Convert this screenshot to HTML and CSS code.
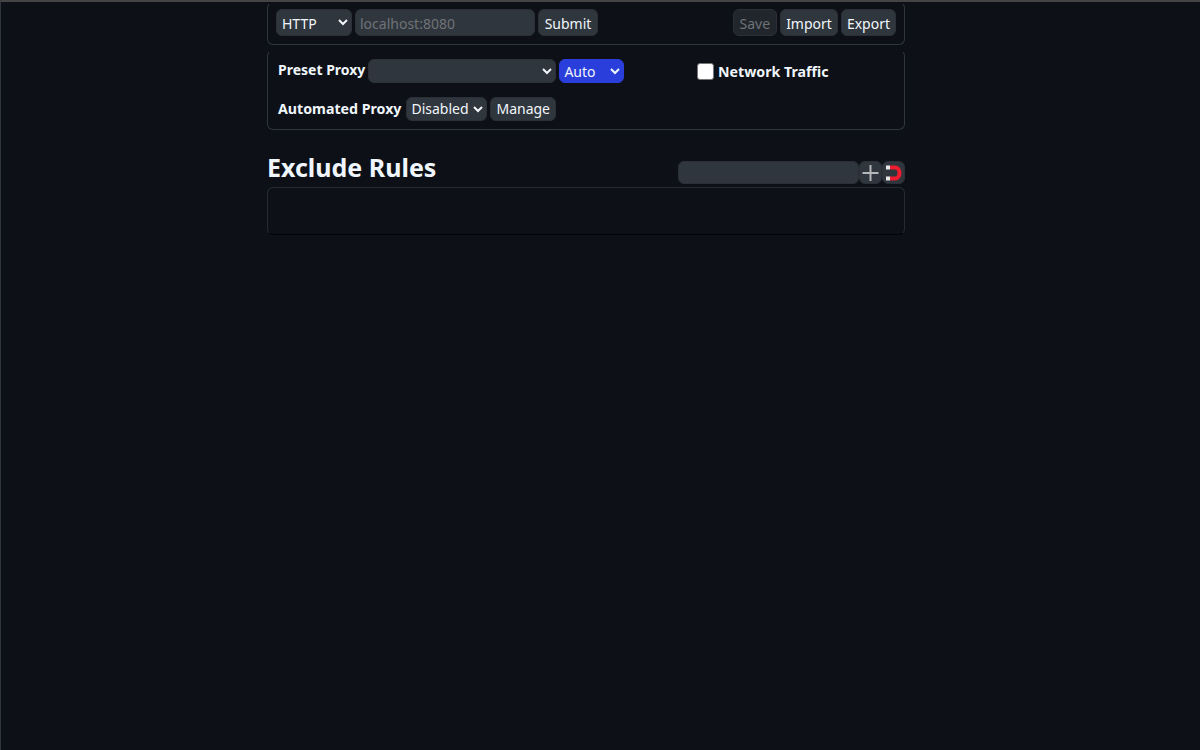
FILE: index.html
```html
<!DOCTYPE html>
<html lang="en">
<head>
    <meta charset="UTF-8">
    <title>Proxy Settings</title>
    <link rel="stylesheet" href="styles.css">
</head>
<body>
<div id="main">
    <div class="box top">
        <div class="group">
            <select class="scheme">
                <option>HTTP</option>
            </select>
            <input class="host" type="text" placeholder="localhost:8080">
            <button class="submit">Submit</button>
        </div>
        <div class="group">
            <button disabled>Save</button>
            <button class="tight">Import</button>
            <button class="tight">Export</button>
        </div>
    </div>
    <div class="box options">
        <div class="left">
            <div class="row">
                <label>Preset Proxy</label>
                <select class="preset"></select>
                <select class="mode">
                    <option>Auto</option>
                </select>
            </div>
            <div class="row">
                <label>Automated Proxy</label>
                <select class="auto">
                    <option>Disabled</option>
                </select>
                <button class="tight">Manage</button>
            </div>
        </div>
        <label class="traffic"><input type="checkbox">Network Traffic</label>
    </div>
    <div class="head">
        <h2>Exclude Rules</h2>
        <div class="tools">
            <input class="rule" type="text">
            <button class="icon">
                <svg width="18" height="18" viewBox="0 0 18 18">
                    <path d="M8.500 1v16M.5 9h16" stroke="#b4b6b8" stroke-width="2" fill="none"/>
                </svg>
            </button>
            <button class="icon">
                <svg width="18" height="16" viewBox="0 0 18 16">
                    <path d="M5 2.500h5a4.500 5.500 0 0 1 0 11H5" stroke="#ee1c2e" stroke-width="4" fill="none"/>
                    <path d="M1 .5h4v4H1zM1 11.500h4v4H1z" fill="#e8e8e8"/>
                </svg>
            </button>
        </div>
    </div>
    <div class="box rules"></div>
</div>
</body>
</html>
```

FILE: styles.css
```css
* {
    padding: 0;
    margin: 0;
    box-sizing: border-box;
}

body {
    height: 750px;
    background: #0d1117;
    border-top: 2px solid #444;
    border-left: 1px solid #30363d;
    font-family: "Noto Sans", "Liberation Sans", sans-serif;
    font-size: 14px;
    color: #f0f6fc;
    overflow: hidden;
}

#main {
    width: 638px;
    margin-left: 266px;
}

.box {
    border: 1px solid #30363d;
    border-top-color: #0d1117;
    border-radius: 6px;
}

.top {
    height: 43px;
    padding: 6px 8px 0;
    display: flex;
    justify-content: space-between;
    align-items: flex-start;
}

.group {
    display: flex;
    gap: 3px;
}

select, input, button {
    height: 27px;
    background: #30363d;
    color: #f0f6fc;
    border: 1px solid #2b3038;
    border-radius: 6px;
    font-family: inherit;
    font-size: 14px;
    outline: none;
}

button {
    padding: 1px 6px 0;
}

button.tight {
    padding: 1px 5px 0;
}

button:disabled {
    background: #21262d;
    color: #6e7378;
}

.submit {
    width: 60px;
    padding: 1px 0 0;
}

.scheme {
    width: 76px;
    padding: 1px 0 0 1px;
}

.host {
    width: 180px;
    padding: 2px 4px 0;
}

.host::placeholder {
    color: #6e7378;
}

.options {
    height: 80px;
    margin-top: 5px;
    padding: 8px 10px 0;
    display: flex;
}

.left {
    width: 419px;
}

.row {
    height: 24px;
    margin-bottom: 14px;
    display: flex;
    gap: 3px;
    align-items: center;
}

.row label, .traffic {
    font-weight: 700;
    font-size: 14.2px;
}

.row label {
    margin-bottom: 1px;
}

.row:first-child label {
    font-size: 14px;
    margin-bottom: 3px;
}

.row select, .row button {
    height: 24px;
    padding-top: 0;
}

.row .auto, .row .tight {
    padding-bottom: 2px;
}

.preset {
    width: 188px;
}

.mode {
    width: 65px;
    background: #2a3edb;
    border-color: #2a3edb;
}

.auto {
    width: 81px;
    margin-left: 2px;
}

.traffic {
    display: flex;
    align-items: center;
    gap: 4px;
    height: 24px;
}

.traffic input {
    width: 17px;
    height: 17px;
    appearance: none;
    background: #fff;
    border: 1px solid #767676;
    border-radius: 3px;
}

.head {
    height: 40px;
    margin-top: 16px;
    display: flex;
    justify-content: space-between;
    align-items: flex-end;
}

h2 {
    font-size: 25px;
    line-height: 33px;
    margin-bottom: 2px;
}

.tools {
    display: flex;
    margin-bottom: 2px;
}

.rule {
    width: 181px;
    height: 23px;
}

.icon {
    width: 23px;
    height: 23px;
    padding: 0;
    display: flex;
    justify-content: center;
    align-items: center;
}

.rules {
    height: 48px;
    margin-top: 1px;
    border-color: #262b33;
    border-bottom-color: #010409;
}
```
